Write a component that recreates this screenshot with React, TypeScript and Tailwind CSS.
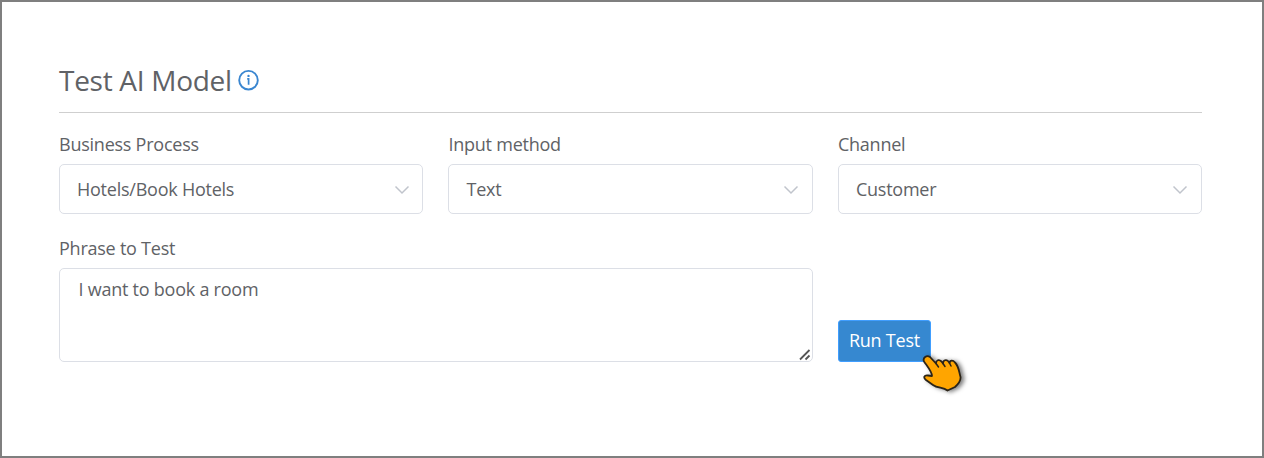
import React from 'react';

interface SelectFieldProps {
  label: string;
  value: string;
}

const SelectField: React.FC<SelectFieldProps> = ({ label, value }) => {
  return (
    <div>
      <label className="block h-6 text-[18px] leading-6">{label}</label>
      <button
        type="button"
        className="mt-2 flex h-[50px] w-full items-center justify-between rounded-[5px] border border-[#dcdfe6] bg-white pl-[17px] pr-[12.5px] text-[18px] tracking-[-0.24px]"
      >
        <span>{value}</span>
        <svg className="mt-px h-4 w-4" viewBox="0 0 16 16" fill="none" stroke="#c0c4cc" strokeWidth="1.5">
          <path d="M1.5 4.5 L8 11 L14.5 4.5" />
        </svg>
      </button>
    </div>
  );
};

const InfoIcon: React.FC = () => (
  <svg className="h-[22px] w-[22px]" viewBox="0 0 22 22" fill="none">
    <circle cx="11.5" cy="11.2" r="9.3" stroke="#3a86d0" strokeWidth="1.9" />
    <path d="M10.2 9.8 H11.6 V15.8" stroke="#3a86d0" strokeWidth="1.7" />
    <circle cx="11.5" cy="6.9" r="1.2" fill="#3a86d0" />
  </svg>
);

const HandPointer: React.FC = () => (
  <svg
    className="absolute left-[80px] top-[30px] h-[52px] w-[52px] drop-shadow-[3px_1px_2px_rgba(0,0,0,0.5)]"
    viewBox="0 0 52 52"
  >
    <path
      d="M6 11.5 C4.5 8 8.5 4.5 12 7 L18 13.5 C18 10 21 9 23.5 11.5 L25 13.5 C25 10 28.5 9 30.5 11.5 L31.5 13 C32 10 35 10 37 12.5 C41 16.5 41 22 42.5 27 C43 31 41 33.5 37 37 L29.5 40.5 C25 37 20 38.5 15 35 L8 30 C5 27.5 6 25 10 25.5 L14 26 C14 22 10.5 18 6 11.5 Z"
      fill="#ffa500"
      stroke="#2b2418"
      strokeWidth="1.8"
      strokeLinejoin="round"
    />
    <path d="M18 13.5 L20.5 17 M25 13.5 L27 16.5 M31.5 13 L33 16" stroke="#2b2418" strokeWidth="1.5" strokeLinecap="round" />
  </svg>
);

const App: React.FC = () => {
  return (
    <main className="h-[458px] w-full border-2 border-[#7f7f7f] bg-white pl-[57px] pr-[60px] pt-[57px] font-['Open_Sans',sans-serif] tracking-[-0.24px] text-[#606266]">
      <header className="flex h-[54px] items-start border-b border-[#cfcfcf]">
        <h1 className="text-[28px] leading-[42px] tracking-[-0.28px]">Test AI Model</h1>
        <span className="ml-[5px] mt-[10px]">
          <InfoIcon />
        </span>
      </header>

      <form className="mt-[19px] grid grid-cols-3 gap-x-[25.4px] gap-y-[22px]">
        <SelectField label="Business Process" value="Hotels/Book Hotels" />
        <SelectField label="Input method" value="Text" />
        <SelectField label="Channel" value="Customer" />

        <div className="col-span-2">
          <label className="block h-6 text-[18px] leading-6">Phrase to Test</label>
          <div className="mt-2 flex h-[94px] rounded-[5px] border border-[#dcdfe6]">
            <textarea
              className="h-full flex-1 resize-none bg-transparent pl-[18.5px] pt-2 text-[18px] leading-[25px] tracking-[-0.24px] outline-none"
              defaultValue="I want to book a room"
            />
            {/* resize grip */}
            <svg className="mr-[1px] h-3 w-3 self-end" viewBox="0 0 12 12" stroke="#555" strokeWidth="1.8">
              <path d="M1 10.5 L10.5 1 M6.5 10.5 L10.5 6.5" />
            </svg>
          </div>
        </div>

        <div className="relative self-end justify-self-start">
          <button
            type="button"
            className="block h-[42px] w-[93px] whitespace-nowrap rounded-[3px] border border-[#409eff] bg-[#3688d0] pb-[2px] text-center text-[18px] tracking-[-0.24px] text-white"
          >
            Run Test
          </button>
          <HandPointer />
        </div>
      </form>
    </main>
  );
};

export default App;
